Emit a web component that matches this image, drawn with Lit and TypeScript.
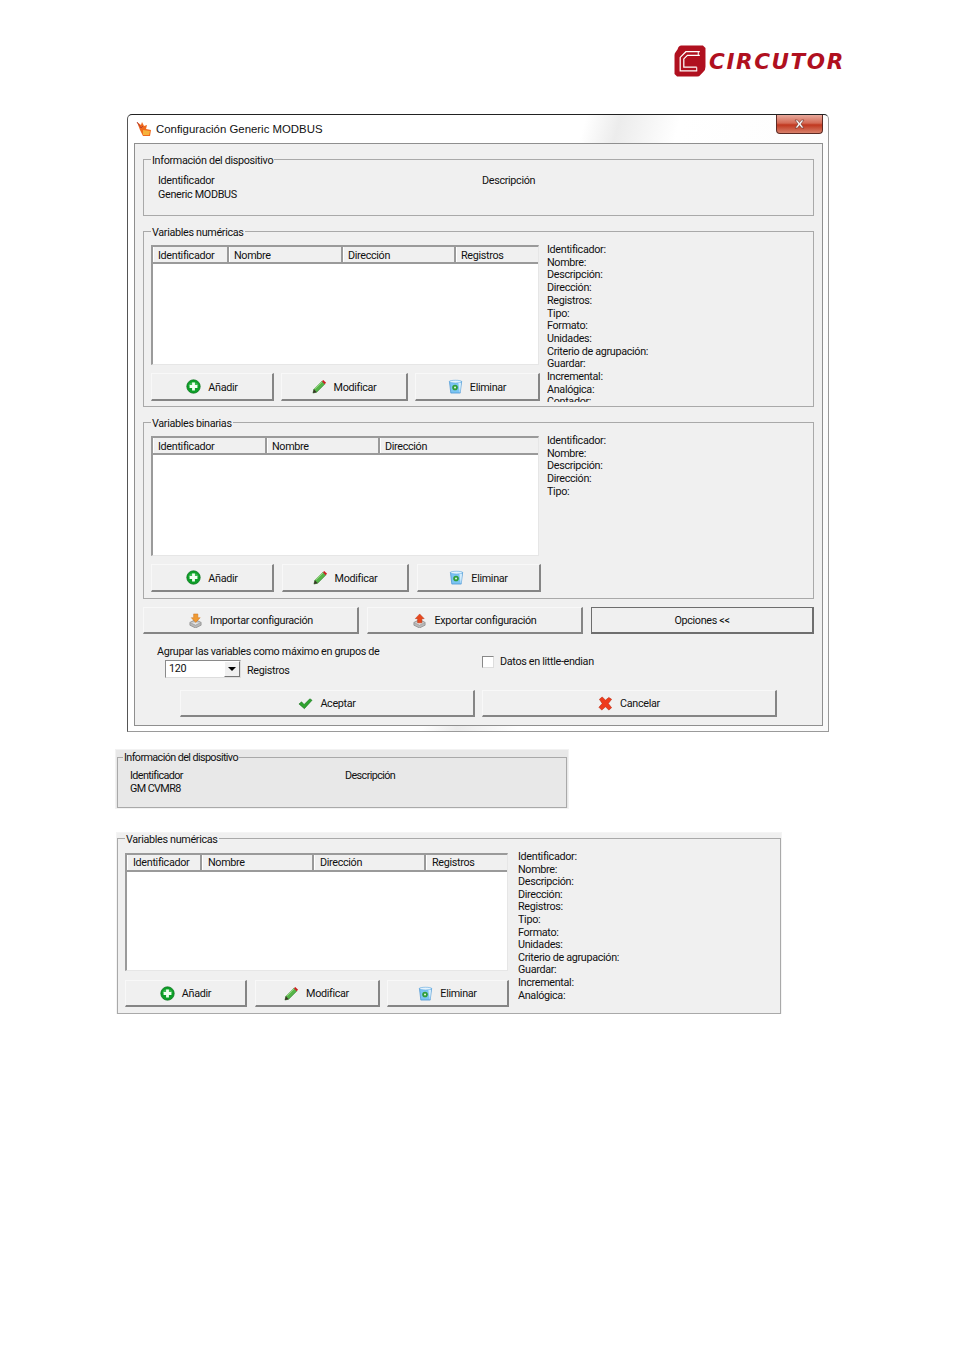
import { LitElement, html, css, svg } from "lit";
import { customElement } from "lit/decorators.js";

const addIcon = svg`<svg class="ico" viewBox="0 0 16 16"><circle cx="8" cy="8" r="7.200" fill="#0d9f28" stroke="#0a6e1c" stroke-width=".7"/><path d="M2.500 7a5.800 5 0 0 1 11 0z" fill="#5fd070" opacity=".55"/><path d="M6.500 3.800h3v2.700h2.700v3H9.500v2.700h-3V9.500H3.800v-3h2.700z" fill="#f2fff2"/></svg>`;
const pencilIcon = svg`<svg class="ico" viewBox="0 0 16 16"><path d="M1 15l1-4L10.500 2.500l3 3L5 14z" fill="#56b548" stroke="#2d7a2a" stroke-width=".6"/><path d="M10.500 2.500L12 1l3 3-1.500 1.500z" fill="#c81e1e"/><path d="M1 15l1-4 3 3z" fill="#3b3028"/><path d="M3 10.500L10.500 3" stroke="#b6ec9e" stroke-width="1"/></svg>`;
const binIcon = svg`<svg class="ico" viewBox="0 0 16 16"><path d="M1.500 2.500h13L13 15H3z" fill="#7cc4f2" stroke="#3a8bd0" stroke-width=".7"/><ellipse cx="8" cy="2.800" rx="6.500" ry="1.500" fill="#e4f3fd" stroke="#5aa6e0" stroke-width=".6"/><path d="M11 4l1.500 10.500H13L14 4z" fill="#e8f6ff" opacity=".8"/><circle cx="7.500" cy="9" r="3" fill="#2f9e3a"/><circle cx="7.500" cy="9" r="1.100" fill="#dff5df"/></svg>`;
const importIcon = svg`<svg class="ico" viewBox="0 0 16 16"><path d="M2 10l6-3 6 3v3l-6 3-6-3z" fill="#b8b8b8" stroke="#777" stroke-width=".6"/><path d="M2 10l6 3 6-3" fill="#e6e6e6" stroke="#888" stroke-width=".6"/><path d="M6 1h4.500v4h2.500L8.200 10 3.500 5H6z" fill="#f09a32" stroke="#c9701a" stroke-width=".5"/></svg>`;
const exportIcon = svg`<svg class="ico" viewBox="0 0 16 16"><path d="M2 10l6-3 6 3v3l-6 3-6-3z" fill="#b8b8b8" stroke="#777" stroke-width=".6"/><path d="M2 10l6 3 6-3" fill="#e6e6e6" stroke="#888" stroke-width=".6"/><path d="M6 10.500V6H3.500L8.200 1 13 6h-2.500v4.500z" fill="#e8481e" stroke="#b8300f" stroke-width=".5"/></svg>`;
const checkIcon = svg`<svg class="ico" viewBox="0 0 16 16"><path d="M1 8.500l2.800-2.300 2.700 2.900L12.600 3 15 4.500 6.800 13.500z" fill="#2fa32f" stroke="#15701c" stroke-width=".6"/></svg>`;
const crossIcon = svg`<svg class="ico" viewBox="0 0 16 16"><path d="M1.500 3.500L4.500 1 8 4.500 11.500 1.500l3 2L11 8l3.500 4.500-3 2.500L8 11.500 4 15 1 12l3.500-4z" fill="#ee3b1c" stroke="#b82208" stroke-width=".6"/></svg>`;
const flameIcon = svg`<svg class="title-ico" viewBox="0 0 16 16"><path d="M1 1l4 3 1-3 2 4 3-1-1 4 5 1-1 6H7L4 9z" fill="#ef6a1d"/><path d="M7 14V9l7 1-1 4z" fill="#f6b23c"/><path d="M1 1l4 6 2-2" fill="none" stroke="#a33" stroke-width=".8"/></svg>`;
const logoMark = svg`<svg class="logo-mark" viewBox="0 0 31 31"><path d="M7 .5h21l2.500 2.500v18q0 3-2 5l-3 3q-1 1.500-3 1.500H3L.5 28V10q0-2 1-3l2-3q1-3.500 3.500-3.500z" fill="#b0101f"/><path d="M25 6.500H11.500L6 12v13h16.500" fill="none" stroke="#fff" stroke-width="1.200"/><path d="M25 10H13l-3.500 3.500v8H22" fill="none" stroke="#fff" stroke-width="1.200"/><path d="M23.500 6.500v3.500M22 21.500V25" stroke="#fff" stroke-width="1"/></svg>`;

const numericLabels = ["Identificador:", "Nombre:", "Descripción:", "Dirección:", "Registros:", "Tipo:", "Formato:", "Unidades:", "Criterio de agrupación:", "Guardar:", "Incremental:", "Analógica:", "Contador:"];
const binaryLabels = ["Identificador:", "Nombre:", "Descripción:", "Dirección:", "Tipo:"];
const numCols = [{ t: "Identificador", w: 76 }, { t: "Nombre", w: 114 }, { t: "Dirección", w: 113 }, { t: "Registros", w: 83 }];

@customElement("x-group")
class XGroup extends LitElement {
  static properties = { label: {} };
  label = "";
  static styles = css`
    :host { display: block; position: relative; border: 1px solid #a9a9a9; box-sizing: border-box; }
    .legend { position: absolute; left: var(--legend-x, 7px); top: var(--legend-y, -6px); padding: 0 1px; line-height: 14px; background: var(--legend-bg, #f0f0f0); white-space: nowrap; }
  `;
  render() {
    return html`<div class="legend">${this.label}</div><slot></slot>`;
  }
}

@customElement("app-root")
class AppRoot extends LitElement {
  static styles = css`
    :host { display: block; width: 955px; height: 1350px; background: #fff; overflow: hidden; font: 10.800px/14px Roboto, "Liberation Sans", sans-serif; letter-spacing: -.33px; color: #111; }
    .page { display: flex; flex-direction: column; height: 100%; }
    .logo-row { height: 114px; box-sizing: border-box; padding: 45px 111px 0 0; display: flex; justify-content: flex-end; align-items: flex-start; gap: 3px; }
    .logo-mark { width: 32px; height: 32px; }
    .logo-text { font: italic bold 21.500px/33px "DejaVu Sans", sans-serif; color: #b0101f; letter-spacing: 1.600px; width: 135px; white-space: nowrap; }

    .window { margin-left: 127px; width: 702px; height: 618px; box-sizing: border-box; border: 1px solid #9a9a9a; border-top-color: #222; border-left-color: #555; border-radius: 5px 5px 0 0; background: linear-gradient(105deg, #fff 53%, #ececec 57%, #fff 64%, #fafafa); padding: 0 5px 5px 6px; display: flex; flex-direction: column; }
    .titlebar { height: 28px; flex: none; display: flex; align-items: flex-start; gap: 4px; padding-left: 2px; font: 11.400px/28px "Liberation Sans", sans-serif; letter-spacing: 0; }
    .title-ico { width: 16px; height: 16px; margin-top: 6px; }
    .title-text { flex: 1; }
    .close { width: 45px; height: 18px; border: 1px solid #5c2a24; border-top: 0; border-radius: 0 0 4px 4px; background: linear-gradient(#e8a99c, #d46a55 45%, #c0371f 55%, #d8806a); display: flex; align-items: center; justify-content: center; }
    .close svg { width: 11px; height: 10px; }

    .panel { flex: 1; background: #f0f0f0; border: 1px solid #8f8f8f; padding: 15px 8px 0; display: flex; flex-direction: column; }
    .g1 { height: 57px; padding: 14px 14px 0; display: grid; grid-template-columns: 324px 1fr; }
    .g2 { height: 176px; margin-top: 15px; padding: 11px 0 0 7px; display: flex; gap: 7px; }
    .g3 { height: 177px; margin-top: 15px; padding: 11px 0 0 7px; display: flex; gap: 7px; }

    .left { width: 389px; flex: none; padding-top: 2px; }
    .table { height: 120px; margin-right: 1px; box-sizing: border-box; background: #fff; border: 1px solid #e6e6e6; border-top: 2px solid #9a9a9a; border-left: 2px solid #9a9a9a; }
    .thead { display: grid; height: 15px; background: #f0f0f0; border-bottom: 2px solid #9a9a9a; box-sizing: content-box; }
    .th { box-sizing: border-box; border-right: 2px solid #9a9a9a; border-left: 1px solid #fff; padding-left: 4px; line-height: 18px; white-space: nowrap; overflow: hidden; }
    .th:last-child { border-right: 0; }
    .btns { display: grid; margin-top: 8px; height: 28px; }
    .btn { box-sizing: border-box; display: flex; align-items: center; justify-content: center; gap: 7px; background: #f0f0f0; border: 1px solid #f8f8f8; border-right: 2px solid #858585; border-bottom: 2px solid #858585; white-space: nowrap; }
    .btn span { padding-top: 2px; }
    .ico { width: 15px; height: 15px; flex: none; }
    .labels { flex: 1; height: 159px; box-sizing: border-box; padding-top: 1px; overflow: hidden; line-height: 12.700px; white-space: nowrap; }

    .actions { display: grid; grid-template-columns: 216px 216px 223px; column-gap: 8px; margin-top: 8px; height: 27px; }
    .default { border: 1px solid #6e6e6e; border-right-width: 2px; border-bottom-width: 2px; }
    .opts { height: 56px; display: grid; grid-template-columns: 325px 1fr; padding-left: 14px; }
    .agrupar { padding-top: 11px; }
    .combo-row { display: flex; align-items: center; gap: 6px; margin: 1px 0 0 8px; }
    .combo { width: 76px; height: 18px; box-sizing: border-box; background: #fff; border: 1px solid #8a8a8a; border-right-color: #ddd; border-bottom-color: #ddd; display: flex; justify-content: space-between; padding-left: 3px; line-height: 16px; }
    .reg { padding-top: 3px; }
    .arrow { width: 16px; background: #f0f0f0; border: 1px solid #fff; border-right-color: #777; border-bottom-color: #777; display: flex; align-items: center; justify-content: center; box-sizing: border-box; }
    .arrow i { border: 4px solid transparent; border-top: 4px solid #000; border-bottom: 0; }
    .check { display: flex; align-items: center; gap: 6px; padding-top: 21px; height: 14px; line-height: 16px; }
    .box { width: 12px; height: 12px; box-sizing: border-box; background: #fff; border: 1px solid #888; border-right-color: #ddd; border-bottom-color: #ddd; }
    .footer { display: grid; grid-template-columns: 295px 295px; column-gap: 7px; margin-left: 37px; height: 27px; }

    .shot1 { margin: 17px 0 0 115px; width: 454px; height: 60px; box-sizing: border-box; background: #e8e8e8; border: 1px solid #f2f2f2; padding: 7px 1px 1px; letter-spacing: -.6px; --legend-bg: #e8e8e8; --legend-x: 5px; --legend-y: -7px; }
    .shot1 x-group { height: 51px; }
    .s1grid { display: grid; grid-template-columns: 215px 1fr; padding: 11px 0 0 12px; line-height: 13px; }
    .shot2 { margin: 23px 0 0 116px; width: 666px; height: 182px; box-sizing: border-box; background: #f0f0f0; border: 1px solid #f4f4f4; padding: 5px 0 0; }
    .shot2 x-group { height: 176px; padding: 11px 0 0 7px; display: flex; gap: 9px; }
    .shot2 .left { width: 384px; padding-top: 3px; }
    .shot2 .table { height: 118px; }
    .shot2 .th { line-height: 16px; padding-left: 5px; }
    .shot2 .labels { line-height: 12.600px; height: 155px; }
    .shot2 .btns { margin-top: 9px; height: 27px; }
  `;

  table(cols: { t: string; w: number }[]) {
    const tpl = cols.map((c) => c.w + "px").join(" ");
    return html`<div class="table"><div class="thead" style="grid-template-columns:${tpl}">
      ${cols.map((c) => html`<div class="th">${c.t}</div>`)}</div></div>`;
  }
  buttons(w: number[], gap: number) {
    const style = `grid-template-columns:${w.map((x) => x + "px").join(" ")};column-gap:${gap}px`;
    return html`<div class="btns" style=${style}>
      <div class="btn">${addIcon}<span>Añadir</span></div>
      <div class="btn">${pencilIcon}<span>Modificar</span></div>
      <div class="btn">${binIcon}<span>Eliminar</span></div>
    </div>`;
  }
  labels(list: string[]) {
    return html`<div class="labels">${list.map((l) => html`<div>${l}</div>`)}</div>`;
  }

  render() {
    return html`<div class="page">
      <div class="logo-row">${logoMark}<div class="logo-text">CIRCUTOR</div></div>

      <div class="window">
        <div class="titlebar">${flameIcon}<div class="title-text">Configuración Generic MODBUS</div>
          <div class="close"><svg viewBox="0 0 11 10"><path d="M1 1h2.500L5.500 3.500 7.500 1H10L7 5l3 4H7.500l-2-2.500L3.500 9H1l3-4z" fill="#f4f4f4" stroke="#6b2a20" stroke-width=".6"/></svg></div>
        </div>
        <div class="panel">
          <x-group class="g1" label="Información del dispositivo">
            <div>Identificador<br />Generic MODBUS</div><div>Descripción</div>
          </x-group>
          <x-group class="g2" label="Variables numéricas">
            <div class="left">${this.table(numCols)}${this.buttons([123, 127, 125], 7)}</div>
            ${this.labels(numericLabels)}
          </x-group>
          <x-group class="g3" label="Variables binarias">
            <div class="left">${this.table([{ t: "Identificador", w: 114 }, { t: "Nombre", w: 113 }, { t: "Dirección", w: 159 }])}${this.buttons([123, 127, 124], 8)}</div>
            ${this.labels(binaryLabels)}
          </x-group>
          <div class="actions">
            <div class="btn">${importIcon}<span>Importar configuración</span></div>
            <div class="btn">${exportIcon}<span>Exportar configuración</span></div>
            <div class="btn default"><span>Opciones &lt;&lt;</span></div>
          </div>
          <div class="opts">
            <div class="agrupar">Agrupar las variables como máximo en grupos de
              <div class="combo-row"><div class="combo">120<div class="arrow"><i></i></div></div><span class="reg">Registros</span></div>
            </div>
            <div class="check"><div class="box"></div>Datos en little-endian</div>
          </div>
          <div class="footer">
            <div class="btn">${checkIcon}<span>Aceptar</span></div>
            <div class="btn">${crossIcon}<span>Cancelar</span></div>
          </div>
        </div>
      </div>

      <div class="shot1">
        <x-group label="Información del dispositivo">
          <div class="s1grid"><div>Identificador<br />GM CVMR8</div><div>Descripción</div></div>
        </x-group>
      </div>

      <div class="shot2">
        <x-group label="Variables numéricas">
          <div class="left">${this.table([{ t: "Identificador", w: 75 }, { t: "Nombre", w: 112 }, { t: "Dirección", w: 112 }, { t: "Registros", w: 83 }])}${this.buttons([122, 125, 122], 7.500)}</div>
          ${this.labels(numericLabels.slice(0, 12))}
        </x-group>
      </div>
    </div>`;
  }
}
